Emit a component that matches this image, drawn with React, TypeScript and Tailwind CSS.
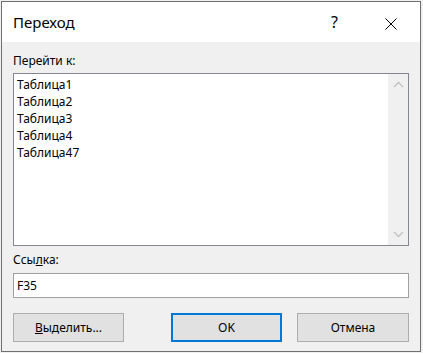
import React from "react";

const font = { fontFamily: '"Noto Sans", "Open Sans", sans-serif' };

export default function App() {
  const items = ["Таблица1", "Таблица2", "Таблица3", "Таблица4", "Таблица47"];
  return (
    <div className="w-[423px] h-[353px] bg-[#f0f0f0] pl-px pt-px" style={font}>
      <div className="w-[420px] h-[351px] border border-[#707070] flex flex-col bg-[#f0f0f0]">
        {/* title bar */}
        <div className="h-[40px] bg-white flex items-center pl-[11px] relative">
          <span className="text-[15px] text-black leading-none">Переход</span>
          <span className="absolute left-[329px] top-[12px] text-[16px] leading-none text-black">?</span>
          <svg className="absolute left-[383px] top-[16px]" width="12" height="12" viewBox="0 0 12 12">
            <path d="M0.5 0.5 L11.5 11.5 M11.5 0.5 L0.5 11.5" stroke="#000" strokeWidth="1" fill="none" />
          </svg>
        </div>
        {/* content */}
        <div className="flex flex-col px-[11px] pt-[11px] text-[12px] text-black">
          <div className="h-[16px] leading-[16px]">Перейти к:</div>
          <div className="mt-[4px] h-[173px] border border-[#828790] bg-white flex">
            <div className="flex-1 pt-[2px] pl-[3px]">
              {items.map((t) => (
                <div key={t} className="h-[17px] leading-[17px]">{t}</div>
              ))}
            </div>
            <div className="w-[20px] bg-[#f0f0f0] flex flex-col items-center justify-between py-[7px]">
              <svg width="11" height="7" viewBox="0 0 11 7">
                <path d="M1 6 L5.5 1.5 L10 6" stroke="#c2c2c2" strokeWidth="1.4" fill="none" />
              </svg>
              <svg width="11" height="7" viewBox="0 0 11 7">
                <path d="M1 1 L5.5 5.5 L10 1" stroke="#c2c2c2" strokeWidth="1.4" fill="none" />
              </svg>
            </div>
          </div>
          <div className="mt-[6px] h-[16px] leading-[16px]">
            Ссы<span className="underline">л</span>ка:
          </div>
          <div className="mt-[5px] h-[25px] border border-[#a0a0a0] bg-white flex items-center pl-[3px]">
            F35
          </div>
          <div className="mt-[15px] flex">
            <div className="w-[112px] h-[29px] bg-[#e1e1e1] border border-[#adadad] flex items-center justify-center">
              <span><span className="underline">В</span>ыделить...</span>
            </div>
            <div className="ml-[47px] w-[112px] h-[29px] bg-[#e1e1e1] border-2 border-[#0078d7] flex items-center justify-center">
              OK
            </div>
            <div className="ml-[15px] w-[113px] h-[29px] bg-[#e1e1e1] border border-[#adadad] flex items-center justify-center">
              Отмена
            </div>
          </div>
        </div>
      </div>
    </div>
  );
}
